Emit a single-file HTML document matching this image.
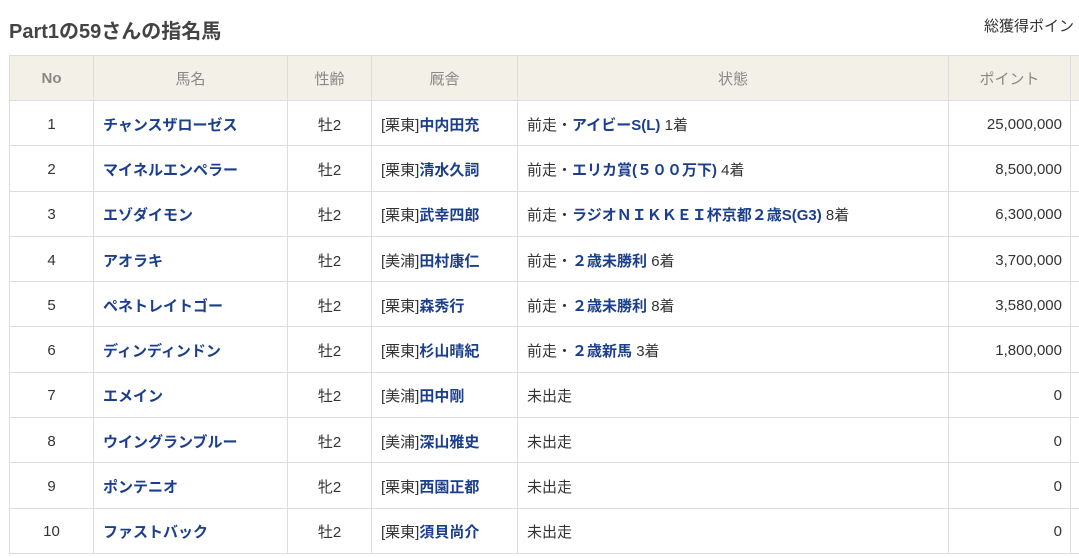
<!DOCTYPE html>
<html><head><meta charset="utf-8"><style>
body{margin:0;background:#fff;font-family:"Liberation Sans","Noto Sans CJK JP",sans-serif;color:#333;width:1079px;height:558px;overflow:hidden;position:relative}
h1{position:absolute;left:9px;top:15px;margin:0;font-size:20px;font-weight:bold;color:#444}
.tot{position:absolute;left:984px;top:15px;font-size:15px;color:#333;white-space:nowrap}
table{position:absolute;left:9px;top:55px;border-collapse:collapse;table-layout:fixed;font-size:15px;width:1081px}
td,th{border:1px solid #ddd;padding:0 9px;white-space:nowrap;overflow:hidden}
th{background:#f3f0e7;color:#888;font-weight:normal;height:44px;font-size:15px}
th.no{font-weight:bold}
td{height:42.3px;padding-top:2px}
.c{text-align:center}.r{text-align:right;padding-right:8px}
a{color:#1b3f8c;font-weight:bold;text-decoration:none}
</style></head><body>
<h1>Part1の59さんの指名馬</h1>
<div class="tot">総獲得ポイン</div>
<table>
<colgroup><col style="width:84px"><col style="width:194px"><col style="width:84px"><col style="width:146px"><col style="width:431px"><col style="width:122px"><col style="width:20px"></colgroup>
<tr><th class="no">No</th><th>馬名</th><th>性齢</th><th>厩舎</th><th>状態</th><th>ポイント</th><th></th></tr>
<tr><td class="c">1</td><td><a>チャンスザローゼス</a></td><td class="c">牡2</td><td>[栗東]<a>中内田充</a></td><td>前走・<a>アイビーS(L)</a> 1着</td><td class="r">25,000,000</td><td></td></tr>
<tr><td class="c">2</td><td><a>マイネルエンペラー</a></td><td class="c">牡2</td><td>[栗東]<a>清水久詞</a></td><td>前走・<a>エリカ賞(５００万下)</a> 4着</td><td class="r">8,500,000</td><td></td></tr>
<tr><td class="c">3</td><td><a>エゾダイモン</a></td><td class="c">牡2</td><td>[栗東]<a>武幸四郎</a></td><td>前走・<a>ラジオＮＩＫＫＥＩ杯京都２歳S(G3)</a> 8着</td><td class="r">6,300,000</td><td></td></tr>
<tr><td class="c">4</td><td><a>アオラキ</a></td><td class="c">牡2</td><td>[美浦]<a>田村康仁</a></td><td>前走・<a>２歳未勝利</a> 6着</td><td class="r">3,700,000</td><td></td></tr>
<tr><td class="c">5</td><td><a>ペネトレイトゴー</a></td><td class="c">牡2</td><td>[栗東]<a>森秀行</a></td><td>前走・<a>２歳未勝利</a> 8着</td><td class="r">3,580,000</td><td></td></tr>
<tr><td class="c">6</td><td><a>ディンディンドン</a></td><td class="c">牡2</td><td>[栗東]<a>杉山晴紀</a></td><td>前走・<a>２歳新馬</a> 3着</td><td class="r">1,800,000</td><td></td></tr>
<tr><td class="c">7</td><td><a>エメイン</a></td><td class="c">牡2</td><td>[美浦]<a>田中剛</a></td><td>未出走</td><td class="r">0</td><td></td></tr>
<tr><td class="c">8</td><td><a>ウイングランブルー</a></td><td class="c">牡2</td><td>[美浦]<a>深山雅史</a></td><td>未出走</td><td class="r">0</td><td></td></tr>
<tr><td class="c">9</td><td><a>ポンテニオ</a></td><td class="c">牝2</td><td>[栗東]<a>西園正都</a></td><td>未出走</td><td class="r">0</td><td></td></tr>
<tr><td class="c">10</td><td><a>ファストバック</a></td><td class="c">牡2</td><td>[栗東]<a>須貝尚介</a></td><td>未出走</td><td class="r">0</td><td></td></tr>
</table>
</body></html>
